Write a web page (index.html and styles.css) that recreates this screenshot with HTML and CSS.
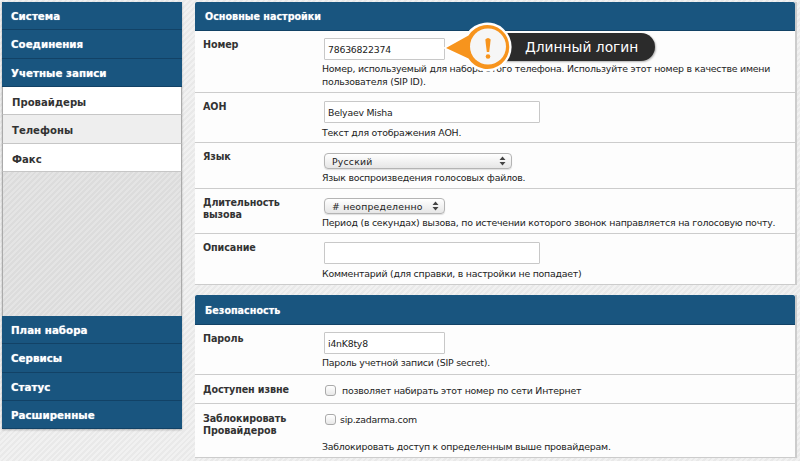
FILE: index.html
```html
<!DOCTYPE html>
<html lang="ru">
<head>
<meta charset="utf-8">
<title>Провайдеры</title>
<link rel="stylesheet" href="styles.css">
</head>
<body>
<div class="page">
  <nav class="sidebar">
    <div class="nav-top">Система</div>
    <div class="nav-top">Соединения</div>
    <div class="nav-top">Учетные записи</div>
    <div class="nav-sub">Провайдеры</div>
    <div class="nav-sub alt">Телефоны</div>
    <div class="nav-sub">Факс</div>
    <div class="nav-fill"></div>
    <div class="nav-top">План набора</div>
    <div class="nav-top">Сервисы</div>
    <div class="nav-top">Статус</div>
    <div class="nav-top">Расширенные</div>
  </nav>
  <main class="content">
    <section class="panel first">
      <h2 class="panel-head">Основные настройки</h2>
      <div class="row h62">
        <div class="label">Номер</div>
        <div class="field">
          <input class="input short" type="text" value="78636822374">
          <p class="help">Номер, используемый для набора этого телефона. Используйте этот номер в качестве имени пользователя (SIP ID).</p>
        </div>
      </div>
      <div class="row h50">
        <div class="label">АОН</div>
        <div class="field pad8">
          <input class="input long" type="text" value="Belyaev Misha">
          <p class="help">Текст для отображения АОН.</p>
        </div>
      </div>
      <div class="row h46">
        <div class="label">Язык</div>
        <div class="field">
          <div class="select lang">Русский<svg class="updown" width="7" height="10" viewBox="0 0 7 10"><path d="M3.5 0.5 6.500 4H.5zM3.5 9.5.5 6h6z"/></svg></div>
          <p class="help">Язык воспроизведения голосовых файлов.</p>
        </div>
      </div>
      <div class="row h45">
        <div class="label">Длительность<br>вызова</div>
        <div class="field">
          <div class="select dur"># неопределенно<svg class="updown" width="7" height="10" viewBox="0 0 7 10"><path d="M3.5 0.5 6.500 4H.5zM3.5 9.5.5 6h6z"/></svg></div>
          <p class="help">Период (в секундах) вызова, по истечении которого звонок направляется на голосовую почту.</p>
        </div>
      </div>
      <div class="row h51">
        <div class="label">Описание</div>
        <div class="field pad8">
          <input class="input long" type="text">
          <p class="help">Комментарий (для справки, в настройки не попадает)</p>
        </div>
      </div>
    </section>
    <section class="panel">
      <h2 class="panel-head">Безопасность</h2>
      <div class="row h50">
        <div class="label">Пароль</div>
        <div class="field">
          <input class="input short" type="text" value="i4nK8ty8">
          <p class="help">Пароль учетной записи (SIP secret).</p>
        </div>
      </div>
      <div class="row h29">
        <div class="label low">Доступен извне</div>
        <div class="field check-line wide"><span class="check"></span>позволяет набирать этот номер по сети Интернет</div>
      </div>
      <div class="row h54">
        <div class="label low">Заблокировать<br>Провайдеров</div>
        <div class="field">
          <div class="check-line"><span class="check"></span>sip.zadarma.com</div>
          <p class="help spaced">Заблокировать доступ к определенным выше провайдерам.</p>
        </div>
      </div>
    </section>
  </main>
  <div class="callout">
    <div class="pill">Длинный логин</div>
    <svg class="badge" width="76" height="50" viewBox="0 0 76 50">
      <path d="M0 26 24 11A24.500 24.500 0 1 1 24 39Z" fill="#fff"/>
      <path d="M3 26 25.500 13.500A22 22 0 1 1 25.500 36.500Z" fill="#f7941d"/>
      <circle cx="45" cy="24.500" r="18" fill="#f6f6f6"/>
      <path d="M42.300 17.500Q45 14.500 47.700 17.500L46.200 30H43.800Z" fill="#f7941d"/>
      <circle cx="45" cy="34.500" r="2.300" fill="#f7941d"/>
    </svg>
  </div>
</div>
</body>
</html>
```
FILE: styles.css
```css
* { box-sizing: border-box; }
html, body { margin: 0; height: 100%; }
body {
  overflow: hidden;
  font-family: "DejaVu Sans", Verdana, sans-serif;
  font-size: 10px;
  color: #222;
  background: repeating-linear-gradient(135deg, #f1f1f1 0 2px, #e9e9e9 2px 4px);
}
.page {
  position: relative;
  display: flex;
  align-items: flex-start;
  gap: 13px;
  width: 800px;
  height: 461px;
  padding: 2px 3px 0 2px;
}
.sidebar {
  display: flex;
  flex-direction: column;
  flex: 0 0 180px;
  height: 427px;
  box-shadow: 0 1px 2px rgba(0,0,0,.25);
}
.nav-top {
  flex: 0 0 28.250px;
  min-height: 0;
  padding: 0 9px;
  line-height: 29px;
  font-weight: 700;
  font-size: 10.300px;
  color: #fff;
  background: #19557f;
  border-bottom: 1px solid #124266;
  text-shadow: 0 0 1px rgba(255,255,255,.6);
}
.nav-sub {
  flex: 0 0 28.500px;
  min-height: 0;
  padding: 0 9px;
  line-height: 32px;
  font-weight: 700;
  font-size: 10.100px;
  color: #333;
  background: #fff;
  border-left: 1px solid #aaa;
  border-right: 1px solid #aaa;
  border-bottom: 1px solid #c6c6c6;
}
.nav-sub.alt { background: #eee; }
.nav-fill {
  flex: 1;
  border-left: 1px solid #aaa;
  border-right: 1px solid #aaa;
  background: repeating-linear-gradient(135deg, #e4e4e4 0 2px, #dcdcdc 2px 4px);
}
.content {
  display: flex;
  flex-direction: column;
  gap: 10px;
  flex: 1;
  min-width: 0;
}
.panel {
  background: #fdfdfd;
  border-right: 2px solid #ccc;
}
.panel-head {
  margin: 0;
  height: 30px;
  padding: 0 10px;
  line-height: 31px;
  font-size: 9.600px;
  font-weight: 700;
  color: #fff;
  background: #19557f;
  border-bottom: 1px solid #124266;
  border-radius: 2px 2px 0 0;
  text-shadow: 0 0 1px rgba(255,255,255,.5);
}
.panel.first .panel-head { height: 29px; line-height: 30px; }
.row {
  display: flex;
  border-bottom: 1px solid #ccc;
}
.h62 { height: 62px; }
.h50 { height: 50px; }
.h46 { height: 46px; }
.h45 { height: 45px; }
.h51 { height: 51px; }
.h29 { height: 29px; }
.h54 { height: 54px; }
.label {
  flex: 0 0 127px;
  padding: 8px 0 0 8px;
  font-size: 9.600px;
  font-weight: 700;
  letter-spacing: -.1px;
  line-height: 12px;
  color: #333;
}
.label.low { padding-top: 9px; }
.field {
  flex: 1;
  padding-top: 7px;
}
.field.pad8 { padding-top: 8px; }
.field.pad8 .help { margin-top: 3px; }
.input {
  display: block;
  height: 22px;
  margin-left: 2px;
  padding: 0 3px;
  font: 9.300px "DejaVu Sans", sans-serif;
  letter-spacing: -.2px;
  color: #222;
  background: #fff;
  border: 1px solid #c8c8c8;
  border-radius: 1px;
  outline: none;
}
.short { width: 121px; }
.long { width: 216px; }
.help {
  margin: 2px 0 0;
  font-size: 9.400px;
  letter-spacing: -.23px;
  line-height: 13px;
  color: #222;
  max-width: 462px;
}
.select {
  display: flex;
  align-items: center;
  justify-content: space-between;
  height: 16px;
  margin: 3px 0 0 2px;
  padding: 0 5px 0 7px;
  font-size: 9.300px;
  letter-spacing: .2px;
  background: linear-gradient(#fff, #e6e6e6);
  border: 1px solid #b4b4b4;
  border-radius: 4px;
  box-shadow: 0 1px 1px rgba(0,0,0,.12);
}
.lang { width: 188px; }
.dur { width: 121px; margin-top: 2px; }
.updown { fill: #444; }
.check-line {
  display: flex;
  align-items: center;
  gap: 4px;
  height: 15px;
  margin-top: 1px;
  margin-left: 3px;
  font-size: 9.400px;
  letter-spacing: -.23px;
}
.check-line.wide { gap: 6px; margin-top: 2px; padding-top: 0; align-self: center; }
.check {
  width: 11px;
  height: 11px;
  background: linear-gradient(#fff, #e8e8e8);
  border: 1px solid #aaa;
  border-radius: 3px;
}
.help.spaced { margin-top: 13px; }
.callout {
  position: absolute;
  left: 443px;
  top: 22px;
  width: 212px;
  height: 50px;
}
.pill {
  position: absolute;
  left: 45px;
  top: 11px;
  width: 167px;
  height: 28px;
  padding-left: 37px;
  line-height: 28px;
  font-size: 13.800px;
  color: #fff;
  background: #2b2b2b;
  border-radius: 0 14px 14px 0;
  box-shadow: 1px 1px 2px rgba(0,0,0,.3);
}
.badge {
  position: absolute;
  left: 0;
  top: 0;
}
```
